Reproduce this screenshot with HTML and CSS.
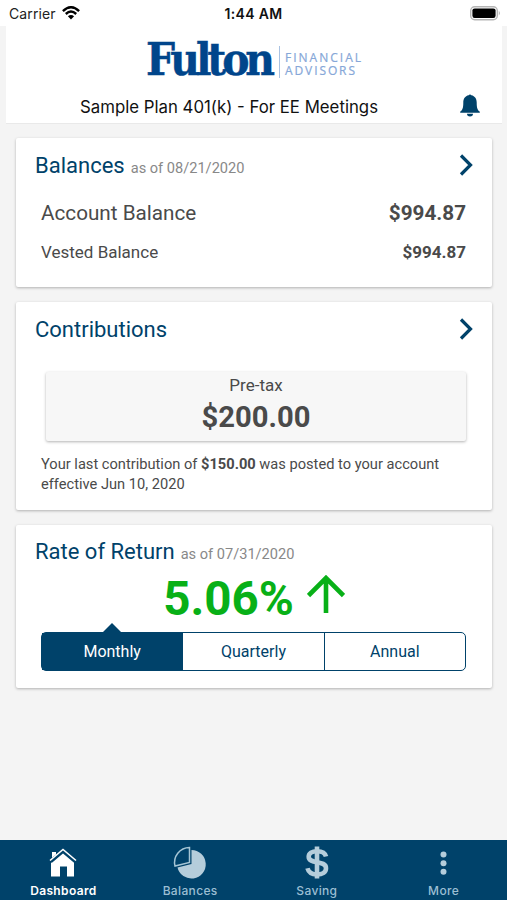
FILE: index.html
```html
<!DOCTYPE html>
<html lang="en">
<head>
<meta charset="utf-8">
<title>Dashboard</title>
<link rel="stylesheet" href="styles.css">
</head>
<body>
<div class="app">
  <div class="status">
    <div class="carrier"><span>Carrier</span>
      <svg width="18" height="14" viewBox="0 0 18 14"><g fill="none" stroke="#000" stroke-width="2.4"><path d="M.9 5.1Q9-2.6 17.1 5.1"/><path d="M3.8 8Q9 3.2 14.2 8"/></g><path d="M9 13.5 5.9 10.2Q9 7.7 12.1 10.2Z"/></svg>
    </div>
    <div class="clock">1:44 AM</div>
    <svg class="battery" width="31" height="15" viewBox="0 0 31 15"><rect x=".7" y=".7" width="26.6" height="13" rx="4" fill="#fff" stroke="#b5b5b5" stroke-width="1.4"/><rect x="2.4" y="2.4" width="23.2" height="9.6" rx="2.2"/><path d="M28.8 4.8q2 2.4 0 4.8z" fill="#aaa"/></svg>
  </div>
  <header class="header">
    <svg class="logo" width="220" height="50" viewBox="0 -6 220 50">
      <text class="brand" x="1" y="36.500" textLength="125" lengthAdjust="spacingAndGlyphs">Fulton</text>
      <path d="M134.500 8v32" stroke="#a9c2e2"/>
      <text class="sub" x="140" y="24" textLength="76">FINANCIAL</text>
      <text class="sub" x="140" y="37" textLength="70">ADVISORS</text>
    </svg>
    <div class="plan">Sample Plan 401(k) - For EE Meetings</div>
    <svg class="bell" width="20" height="24" viewBox="0 0 20 24"><path d="M8.700 2.300a1.400 1.400 0 0 1 2.600 0C15 3 16.700 6 16.700 9.500c0 5.500.8 7.700 3.100 9.200v1H.2v-1c2.300-1.500 3.100-3.700 3.100-9.200C3.300 6 5 3 8.700 2.300z"/><path d="M7 20.800h6a3 2.700 0 0 1-6 0z"/></svg>
  </header>
  <main class="content">
    <section class="card balances">
      <div class="title"><h2>Balances</h2><span>as of 08/21/2020</span>
        <svg class="chev" width="14" height="22" viewBox="0 0 14 22"><path d="m2 1.500 9.500 9.500L2 20.500"/></svg></div>
      <div class="row main-row"><span>Account Balance</span><b>$994.87</b></div>
      <div class="row small-row"><span>Vested Balance</span><b>$994.87</b></div>
    </section>
    <section class="card contributions">
      <div class="title"><h2>Contributions</h2>
        <svg class="chev" width="14" height="22" viewBox="0 0 14 22"><path d="m2 1.500 9.500 9.500L2 20.500"/></svg></div>
      <div class="pretax"><span>Pre-tax</span><b>$200.00</b></div>
      <p class="note">Your last contribution of <b>$150.00</b> was posted to your account<br>effective Jun 10, 2020</p>
    </section>
    <section class="card return">
      <div class="title"><h2>Rate of Return</h2><span>as of 07/31/2020</span></div>
      <div class="rate"><b>5.06%</b>
        <svg width="38" height="39" viewBox="0 0 38 39"><path d="M19 38V3M1.500 20.500 19 3l17.500 17.500" fill="none" stroke="#08b017" stroke-width="4.600"/></svg></div>
      <div class="tabs"><div class="tab active">Monthly</div><div class="tab">Quarterly</div><div class="tab">Annual</div></div>
    </section>
  </main>
  <nav class="nav">
    <div class="item on"><svg width="36" height="36" viewBox="0 0 36 36"><path d="M7 7h4v5L18 6l11 10v15.500h-7v-10h-7v10H6V16l1-1z" fill="#fff"/><path d="M5.500 16.500 18 6l12.500 10.500" fill="none" stroke="#00426a" stroke-width="3.600"/><path d="M5 15.500 18 4.500l13 11" fill="none" stroke="#fff" stroke-width="1.600"/></svg><span>Dashboard</span></div>
    <div class="item"><svg width="36" height="36" viewBox="0 0 36 36"><path d="M19.500 5a14.300 14.300 0 1 1-14 17.500L19.500 19z" fill="#b5cddb"/><path d="M17.500 2.500A15 15 0 0 0 3 21L17.500 17.500z" fill="#00426a" stroke="#a5c5d5" stroke-width="1.500"/></svg><span>Balances</span></div>
    <div class="item"><svg width="36" height="36" viewBox="0 0 36 36"><g fill="none" stroke="#b5cddb" stroke-width="4.600"><path d="M27 11.500C26 7 22.500 6.200 18 6.200c-5 0-8.300 2-8.300 5.500 0 8 17.300 3 17.300 11.500 0 4-3.500 6.200-9 6.200-5.500 0-8.500-2.300-9.500-6.200"/><path d="M18 1.500v32"/></g></svg><span>Saving</span></div>
    <div class="item"><svg width="36" height="36" viewBox="0 0 36 36"><g fill="#b5cddb"><circle cx="17.500" cy="9.500" r="3"/><circle cx="17.500" cy="18.300" r="3"/><circle cx="17.500" cy="26.700" r="3"/></g></svg><span>More</span></div>
  </nav>
</div>
</body>
</html>
```
FILE: styles.css
```css
* { box-sizing: border-box; }
body { margin: 0; background: #f4f4f4; font-family: Roboto, sans-serif; color: #4a4a4a; }
svg { display: block; flex: none; }
b { font-weight: 700; }
.app { width: 507px; height: 900px; display: flex; flex-direction: column; overflow: hidden; }
.status { height: 26px; background: #fff; display: grid; grid-template-columns: 1fr auto 1fr; align-items: center; padding: 1px 6px 0 9px; font: 14px/24px Inter, sans-serif; color: #222; }
.carrier { display: flex; gap: 6px; align-items: center; letter-spacing: .1px; }
.carrier svg { margin-top: -2px; }
.clock { font-weight: 600; color: #111; letter-spacing: .3px; margin-left: -3px; }
.battery { justify-self: end; }
.header { height: 97px; margin: 0 5px 0 6px; background: #fff; display: grid; grid-template-columns: 1fr 34px; grid-template-rows: 66px 31px; box-shadow: 0 1px #e9e9e9; }
.logo { grid-column: 1 / 3; margin: 6px 0 0 139px; overflow: visible; }
.brand { font: bold 45px "DejaVu Serif", serif; letter-spacing: -4.500px; fill: #00458b; stroke: #00458b; stroke-width: .5; }
.sub { font: 12px "Open Sans", sans-serif; fill: #86a7d8; stroke: #86a7d8; stroke-width: .2; }
.plan { padding-left: 74px; font: 16.800px/30px Inter, sans-serif; color: #111; white-space: nowrap; }
.bell { margin: 1px 11px 0 -1px; fill: #00426a; justify-self: end; transform: translateX(-11px); }
.content { flex: 1; padding: 15px 15px 0 16px; display: flex; flex-direction: column; gap: 15px; }
.card { background: #fff; border-radius: 2px; box-shadow: 0 1px 3px rgba(0,0,0,.28); padding: 0 26px 0 25px; }
.balances { height: 149px; }
.contributions { height: 208px; }
.return { height: 163px; }
.title { height: 54px; margin-left: -6px; display: flex; align-items: baseline; line-height: 56px; white-space: nowrap; }
h2 { margin: 0; font-size: 22px; font-weight: 400; color: #00426a; }
.title span { margin-left: 6px; font-size: 14.600px; color: #888; }
.return .title { line-height: 54px; }
.chev { margin: 0 -7px 0 auto; align-self: center; }
.chev path { fill: none; stroke: #00426a; stroke-width: 3.200; }
.row { display: flex; justify-content: space-between; white-space: nowrap; }
.main-row { font-size: 20.700px; line-height: 42px; }
.small-row { font-size: 17px; line-height: 36px; }
.pretax { height: 69px; margin: 16px 0 0 5px; background: #f7f7f7; border-radius: 2px; box-shadow: 0 1px 3px rgba(0,0,0,.3); display: flex; flex-direction: column; align-items: center; }
.pretax span { font-size: 17px; line-height: 26px; }
.pretax b { font-size: 29.200px; line-height: 38px; }
.note { margin: 14px 0 0; font-size: 14.650px; line-height: 19.500px; white-space: nowrap; }
.rate { height: 53px; display: flex; justify-content: center; align-items: center; gap: 13px; color: #08b017; margin-left: 1px; }
.rate b { font-size: 47.500px; line-height: 40px; margin-top: -14px; }
.rate svg { margin-top: -22px; }
.tabs { display: flex; height: 39px; border: 1.500px solid #00426a; border-radius: 5px; }
.tab { position: relative; flex: 1; text-align: center; font-size: 16px; line-height: 38px; color: #00426a; border-left: 1.500px solid #00426a; }
.tab.active { background: #00426a; color: #fff; border-left: 0; }
.tab.active::before { content: ""; position: absolute; left: 50%; top: -10px; margin-left: -10px; border: 10px solid transparent; border-top: 0; border-bottom-color: #00426a; }
.nav { height: 60px; flex: none; background: #00426a; display: grid; grid-template-columns: repeat(4, 1fr); }
.item { display: flex; flex-direction: column; align-items: center; padding-top: 5px; color: #9bbed3; font: 500 12px/20px Inter, sans-serif; letter-spacing: .35px; }
.item.on { color: #fff; font-weight: 600; }
```
